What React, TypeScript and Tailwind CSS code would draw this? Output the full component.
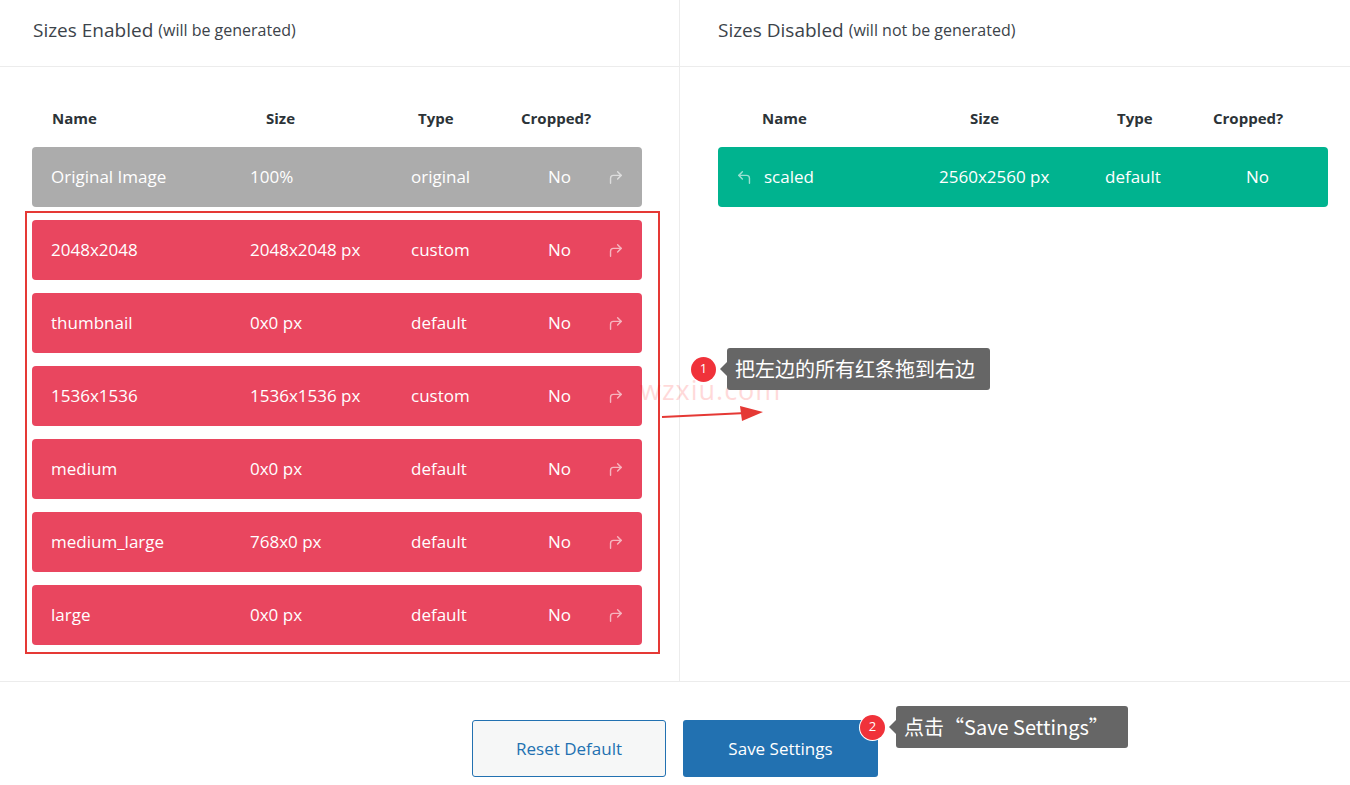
import React from "react";

type Size = {
  name: string;
  size: string;
  type: string;
  cropped: string;
};

const enabled: Size[] = [
  { name: "2048x2048", size: "2048x2048 px", type: "custom", cropped: "No" },
  { name: "thumbnail", size: "0x0 px", type: "default", cropped: "No" },
  { name: "1536x1536", size: "1536x1536 px", type: "custom", cropped: "No" },
  { name: "medium", size: "0x0 px", type: "default", cropped: "No" },
  { name: "medium_large", size: "768x0 px", type: "default", cropped: "No" },
  { name: "large", size: "0x0 px", type: "default", cropped: "No" },
];

function ArrowRight() {
  return (
    <svg width="17" height="17" viewBox="0 0 24 24" fill="none" stroke="currentColor" strokeWidth="2" strokeLinecap="round" strokeLinejoin="round" className="opacity-60">
      <path d="m15 14 5-5-5-5" />
      <path d="M5 20v-7a4 4 0 0 1 4-4h11" />
    </svg>
  );
}

function ArrowLeft() {
  return (
    <svg width="17" height="17" viewBox="0 0 24 24" fill="none" stroke="currentColor" strokeWidth="2" strokeLinecap="round" strokeLinejoin="round" className="opacity-60">
      <path d="m9 14-5-5 5-5" />
      <path d="M19 20v-7a4 4 0 0 0-4-4H4" />
    </svg>
  );
}

function EnabledRow({ item, color }: { item: Size; color: string }) {
  return (
    <div className={`flex items-center h-[60px] rounded-[4px] pl-[19px] text-white text-[17px] ${color}`}>
      <span className="w-[199px]">{item.name}</span>
      <span className="w-[161px]">{item.size}</span>
      <span className="w-[137px]">{item.type}</span>
      <span className="w-[59px]">{item.cropped}</span>
      <ArrowRight />
    </div>
  );
}

function Badge({ n }: { n: string }) {
  return (
    <div className="w-[25px] h-[25px] rounded-full bg-[#f0323a] text-white text-[13px] flex items-center justify-center shadow-[0_0_0_1px_#fff]">
      {n}
    </div>
  );
}

function Tip({ text, wide }: { text: string; wide?: boolean }) {
  return (
    <div
      className={`relative bg-[#666666] text-white text-[20px] rounded-[3px] pl-[8px] h-[42px] flex items-center whitespace-nowrap ${wide ? "pr-[19px]" : "pr-[15px]"}`}
      style={{ fontFamily: '"Noto Sans CJK SC", sans-serif' }}
    >
      <div className="absolute left-[-7px] top-[14px] w-0 h-0 border-y-[7px] border-y-transparent border-r-[7px] border-r-[#666666]" />
      {text}
    </div>
  );
}

export default function App() {
  return (
    <div
      className="relative w-[1350px] h-[785px] bg-white overflow-hidden"
      style={{ fontFamily: '"Open Sans", "Noto Sans CJK SC", sans-serif' }}
    >
      <div className="flex h-[681px]">
        {/* enabled */}
        <div className="w-[680px] shrink-0 border-r border-[#ececec]">
          <div className="h-[67px] border-b border-[#ececec] flex items-center pb-[6px] pl-[33px] text-[#3c434a]">
            <span className="text-[19px]">Sizes Enabled</span>
            <span className="text-[16px] ml-[5px]">(will be generated)</span>
          </div>
          <div className="px-[32px] pt-[31px]">
            <div className="flex items-center h-[40px] pl-[20px] text-[15px] font-bold text-[#2c3338]">
              <span className="w-[214px]">Name</span>
              <span className="w-[152px]">Size</span>
              <span className="w-[103px]">Type</span>
              <span>Cropped?</span>
            </div>
            <div className="mt-[9px] flex flex-col gap-[13px] w-[610px]">
              <EnabledRow
                item={{ name: "Original Image", size: "100%", type: "original", cropped: "No" }}
                color="bg-[#acacac]"
              />
              {enabled.map((s) => (
                <EnabledRow key={s.name} item={s} color="bg-[#e9465f]" />
              ))}
            </div>
          </div>
        </div>

        {/* disabled */}
        <div className="flex-1">
          <div className="h-[67px] border-b border-[#ececec] flex items-center pb-[6px] pl-[38px] text-[#3c434a]">
            <span className="text-[19px]">Sizes Disabled</span>
            <span className="text-[16px] ml-[5px]">(will not be generated)</span>
          </div>
          <div className="px-[38px] pt-[31px]">
            <div className="flex items-center h-[40px] pl-[44px] text-[15px] font-bold text-[#2c3338]">
              <span className="w-[208px]">Name</span>
              <span className="w-[147px]">Size</span>
              <span className="w-[96px]">Type</span>
              <span>Cropped?</span>
            </div>
            <div className="mt-[9px] w-[610px]">
              <div className="flex items-center h-[60px] rounded-[4px] pl-[18px] bg-[#00b38f] text-white text-[17px]">
                <span className="w-[28px]">
                  <ArrowLeft />
                </span>
                <span className="w-[175px]">scaled</span>
                <span className="w-[166px]">2560x2560 px</span>
                <span className="w-[141px]">default</span>
                <span>No</span>
              </div>
            </div>
          </div>
        </div>
      </div>

      {/* footer */}
      <div className="border-t border-[#ececec] h-[104px] flex justify-center items-start pt-[38px] gap-[17px]">
        <button className="w-[194px] h-[57px] rounded-[3px] border border-[#2271b1] bg-[#f6f7f7] text-[#2271b1] text-[17px]">
          Reset Default
        </button>
        <button className="w-[195px] h-[57px] rounded-[3px] bg-[#2271b1] text-white text-[17px]">
          Save Settings
        </button>
      </div>

      {/* annotations */}
      <div className="absolute left-[25px] top-[211px] w-[635px] h-[443px] border-2 border-[#e53935]" />

      <div className="absolute left-[640px] top-[370px] text-[27px] text-[#ff0000]/15 tracking-[1px]">
        wzxiu.com
      </div>

      <svg className="absolute left-[660px] top-[402px]" width="110" height="24" viewBox="0 0 110 24">
        <path d="M2 15 L86 11" stroke="#e53935" strokeWidth="2" />
        <path d="M80 4 L103 10 L82 19 Z" fill="#e53935" />
      </svg>

      <div className="absolute left-[691px] top-[348px] flex items-center gap-[11px]">
        <Badge n="1" />
        <Tip text="把左边的所有红条拖到右边" />
      </div>

      <div className="absolute left-[860px] top-[706px] flex items-center gap-[11px]">
        <Badge n="2" />
        <Tip text="点击“Save Settings”" wide />
      </div>
    </div>
  );
}
